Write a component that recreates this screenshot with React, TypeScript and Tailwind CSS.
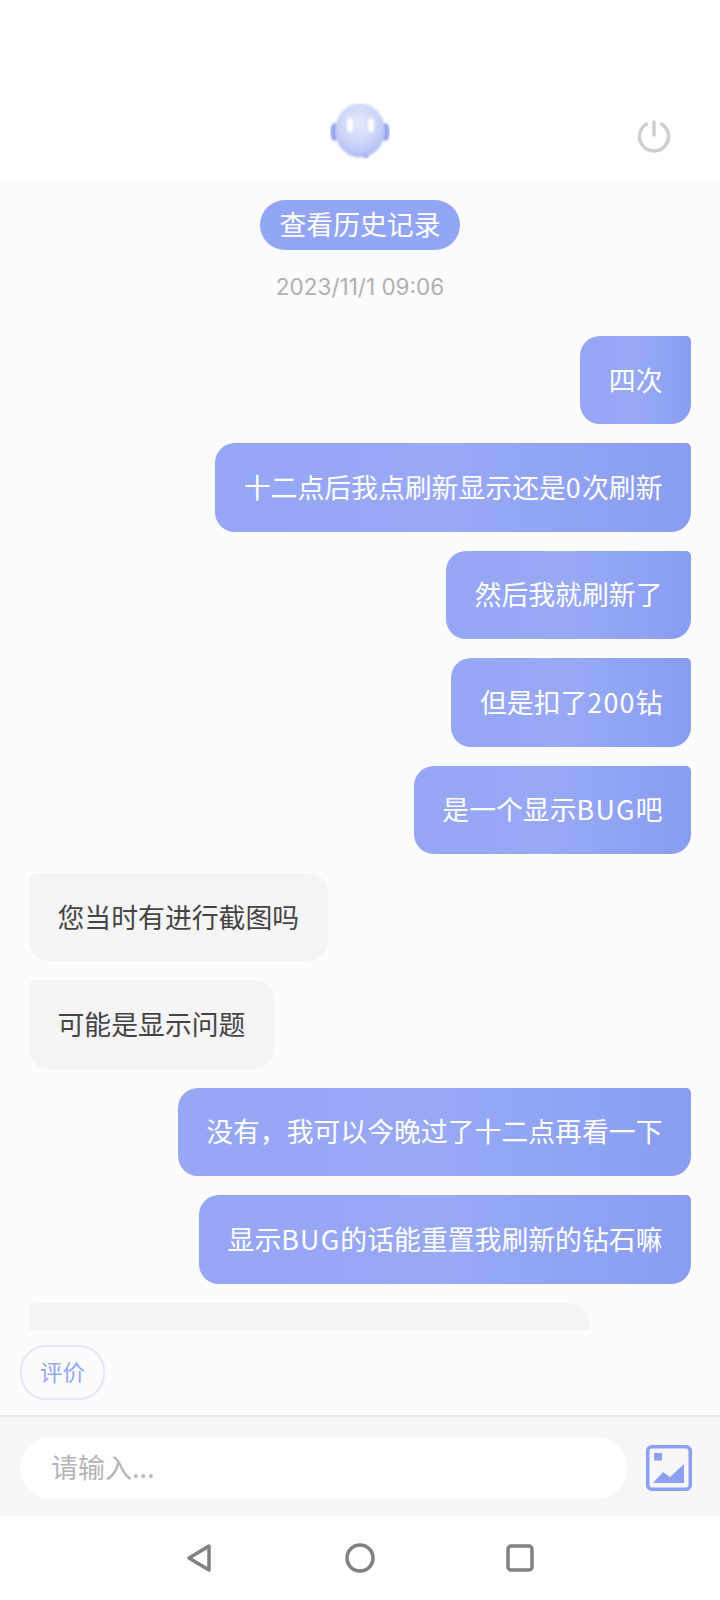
const cjk = "font-['Noto_Sans_CJK_SC','Noto_Sans',sans-serif]";

const messages = [
  { me: true, text: "四次" },
  { me: true, text: "十二点后我点刷新显示还是0次刷新" },
  { me: true, text: "然后我就刷新了" },
  { me: true, text: "但是扣了200钻" },
  { me: true, text: "是一个显示BUG吧" },
  { me: false, text: "您当时有进行截图吗" },
  { me: false, text: "可能是显示问题" },
  { me: true, text: "没有，我可以今晚过了十二点再看一下" },
  { me: true, text: "显示BUG的话能重置我刷新的钻石嘛" },
];

// latin and digits sit a little wider than the CJK font gives them
function Spaced({ text }: { text: string }) {
  return (
    <>
      {text.split(/([0-9A-Z]+)/).map((part, i) =>
        i % 2 === 1 ? (
          <span key={i} className="tracking-[1.2px]">
            {part}
          </span>
        ) : (
          part
        ),
      )}
    </>
  );
}

function Avatar() {
  return (
    <svg width="60" height="56" viewBox="0 0 60 56">
      <defs>
        <radialGradient id="face" cx="0.48" cy="0.36" r="0.68">
          <stop offset="0" stopColor="#e4e8fc" />
          <stop offset="0.55" stopColor="#cdd6f9" />
          <stop offset="1" stopColor="#aab8f5" />
        </radialGradient>
        <filter id="soft" x="-20%" y="-20%" width="140%" height="140%">
          <feGaussianBlur stdDeviation="0.9" />
        </filter>
      </defs>
      <g filter="url(#soft)">
        <ellipse cx="4.5" cy="29" rx="4" ry="9" fill="#8fa3ef" />
        <ellipse cx="55.5" cy="29" rx="4" ry="9" fill="#8fa3ef" />
        <ellipse cx="30" cy="27.5" rx="25" ry="27" fill="url(#face)" />
        <rect x="17" y="15" width="6" height="14" rx="3" fill="#ffffff" opacity="0.9" />
        <rect x="38" y="15" width="6" height="14" rx="3" fill="#ffffff" opacity="0.9" />
        <circle cx="36" cy="53" r="2.5" fill="#a3b2f3" />
      </g>
    </svg>
  );
}

function Bubble({ me, text }: { me: boolean; text: string }) {
  if (me) {
    return (
      <div className="flex justify-end">
        <div className="flex h-[88.4px] items-center rounded-[20px] rounded-tr-[5px] bg-gradient-to-r from-[#95a7f5] via-[#98aaf6] to-[#899df2] px-[28.5px] pb-[1px] text-[26.85px] whitespace-pre text-white">
          <div>
            <Spaced text={text} />
          </div>
        </div>
      </div>
    );
  }
  return (
    <div className="flex justify-start">
      <div className="flex h-[88.4px] items-center rounded-[20px] rounded-tl-[6px] bg-[#f5f5f5] px-[28.5px] pb-[1px] text-[26.85px] whitespace-nowrap text-[#444444]">
        {text}
      </div>
    </div>
  );
}

export default function App() {
  return (
    <div className={`flex h-[1600px] w-[720px] flex-col bg-white ${cjk}`}>
      <header className="flex h-[181px] shrink-0 items-start justify-between bg-white pt-[103px] pr-[49px] pl-[49px]">
        <div className="w-[34px]" />
        <Avatar />
        <svg className="mt-[17px]" width="34" height="33" viewBox="0 0 34 33" fill="none" stroke="#cfcfcf" strokeWidth="3.5" strokeLinecap="round">
          <path d="M17 2v13" />
          <path d="M9.5 4 A14.5 14.5 0 1 0 24.5 4" />
        </svg>
      </header>

      <main className="flex flex-1 flex-col overflow-hidden bg-[#fcfcfc]">
        <div className="h-[1149px] shrink-0 overflow-hidden">
          <div className="flex flex-col items-center pt-[19px] pb-[31px]">
            <div className="flex h-[50px] w-[200px] items-center justify-center rounded-full bg-[#93a6f5] pb-[2px] text-[26.85px] text-white">
              查看历史记录
            </div>
            <div className="mt-[19px] font-['Inter',sans-serif] text-[22.5px] leading-[36px] text-[#b0b0b0]">
              2023/11/1 09:06
            </div>
          </div>
          <div className="flex flex-col gap-[19px] px-[29px]">
            {messages.map((m, i) => (
              <Bubble key={i} me={m.me} text={m.text} />
            ))}
            <div className="h-[88px] w-[560px] rounded-[20px] rounded-tl-[6px] bg-[#f5f5f5]" />
          </div>
        </div>

        <div className="flex flex-1 items-start px-[20px] pt-[15px]">
          <div className="flex h-[55px] w-[85px] items-center justify-center rounded-[26px] border-2 border-[#e3e7fb] pb-[2px] text-[22.5px] text-[#93a6f5]">
            评价
          </div>
        </div>
      </main>

      <div className="flex h-[101px] shrink-0 items-start border-t-2 border-[#e8e8e8] bg-[#f7f7f7] pt-[20px] pr-[28px] pl-[20px]">
        <div className="flex h-[62px] w-[607px] items-center rounded-full bg-white pb-[2px] pl-[31px] text-[27px] text-[#b4b4b4]">
          请输入...
        </div>
        <svg className="mt-[8px] ml-[19px]" width="46" height="46" viewBox="0 0 46 46">
          <rect x="1.75" y="1.75" width="42.5" height="42.5" rx="4" fill="none" stroke="#8b9ff3" strokeWidth="3.5" />
          <rect x="8" y="8" width="8" height="7.5" fill="#8b9ff3" />
          <path d="M7 38 L17 27 L24 32 L38 19 V38 Z" fill="#8b9ff3" />
        </svg>
      </div>

      <nav className="flex h-[84px] shrink-0 items-start justify-center bg-white pt-[27px]">
        <svg className="mr-[133px]" width="26" height="30" viewBox="0 0 26 30" fill="none" stroke="#808080" strokeWidth="3.5" strokeLinejoin="round">
          <path d="M23 3 L3 15 L23 27 Z" />
        </svg>
        <svg className="mr-[130px]" width="30" height="30" viewBox="0 0 30 30" fill="none" stroke="#808080" strokeWidth="3.5">
          <circle cx="15" cy="15" r="13" />
        </svg>
        <svg width="30" height="30" viewBox="0 0 30 30" fill="none" stroke="#808080" strokeWidth="3.5" strokeLinejoin="round">
          <rect x="3" y="3" width="24" height="24" rx="3" />
        </svg>
      </nav>
    </div>
  );
}
